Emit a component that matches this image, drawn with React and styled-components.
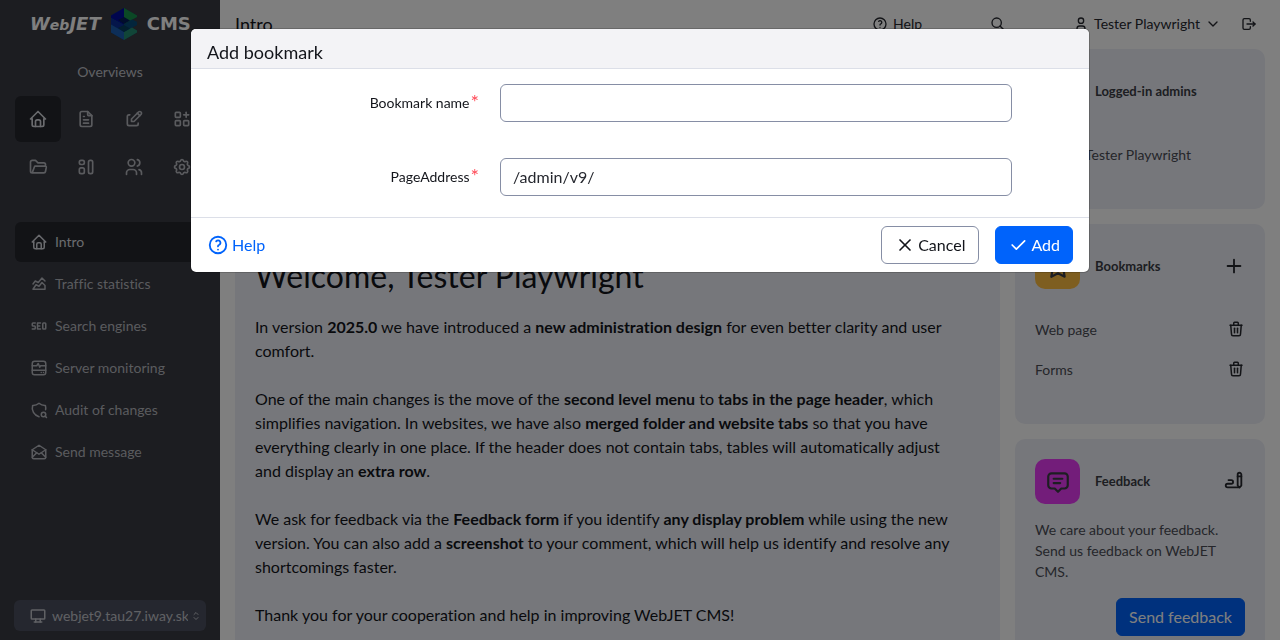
import React from "react";
import styled, { createGlobalStyle, css } from "styled-components";
import {
  TbHome, TbFileText, TbEdit, TbApps, TbFolderOpen, TbUsers, TbSettings,
  TbChartAreaLine, TbSeo, TbShieldSearch, TbMailOpened, TbDeviceDesktop,
  TbSelector, TbHelp, TbSearch, TbUser, TbChevronDown, TbLogout, TbTrash,
  TbPlus, TbX, TbCheck, TbWriting, TbMessage2, TbStar,
} from "react-icons/tb";

const FONT = `Lato, "Noto Sans", sans-serif`;

const GlobalStyle = createGlobalStyle`
  * { box-sizing: border-box; }
  body {
    margin: 0;
    background: #fff;
    color: #13151b;
    font-family: ${FONT};
    font-size: 16px;
    line-height: 24px;
    font-variant-ligatures: no-common-ligatures;
  }
  button, input, select { font-family: inherit; }
  svg { display: block; flex: none; }
`;

const Shell = styled.div`
  display: grid;
  grid-template-columns: 220px minmax(0, 1fr);
  grid-template-rows: minmax(0, 1fr);
  height: 100vh;
  overflow: hidden;
`;

const Sidebar = styled.aside`
  display: flex;
  flex-direction: column;
  padding: 7px 14px 9px;
  background: #383a42;
`;

const Brand = styled.a`
  display: flex;
  align-items: center;
  gap: 9px;
  height: 34px;
  padding-left: 16px;
  color: #fff;
  text-decoration: none;
  font: bold 18px/34px "DejaVu Sans", sans-serif;
`;

const BrandName = styled.span`
  font-style: italic;
  small { font-size: 14px; }
`;

const SectionName = styled.div`
  margin: 19px 0 12px;
  text-align: center;
  font-size: 14px;
  color: #c0c2c9;
`;

const Sections = styled.nav`
  display: grid;
  grid-template-columns: repeat(4, 46px);
  gap: 2px;
  justify-content: center;
`;

const SectionLink = styled.a`
  display: grid;
  place-items: center;
  height: 46px;
  border-radius: 6px;
  color: ${(p) => (p.$active ? "#d4d6dc" : "#b4b6bd")};
  background: ${(p) => (p.$active ? "#24262c" : "transparent")};
`;

const Menu = styled.nav`
  display: flex;
  flex-direction: column;
  gap: 2px;
  margin: 32px 1px 0;
`;

const MenuLink = styled.a`
  display: flex;
  align-items: center;
  gap: 7px;
  height: 40px;
  padding: 0 15px;
  border-radius: 6px;
  font-size: 14px;
  text-decoration: none;
  color: ${(p) => (p.$active ? "#d4d6dc" : "#b4b6bd")};
  background: ${(p) => (p.$active ? "#24262c" : "transparent")};
`;

const DomainPicker = styled.label`
  display: flex;
  align-items: center;
  gap: 2px;
  height: 31px;
  margin-top: auto;
  padding: 0 4px 0 15px;
  border-radius: 6px;
  background: #4b4f5f;
  color: #c0c2c9;
`;

const DomainSelect = styled.select`
  flex: 1;
  min-width: 0;
  padding: 0 0 0 3px;
  border: 0;
  appearance: none;
  background: transparent;
  color: inherit;
  font-size: 14px;
`;

const Main = styled.main`
  display: flex;
  flex-direction: column;
  min-width: 0;
`;

const TopBar = styled.header`
  display: flex;
  flex: none;
  align-items: center;
  height: 49px;
  padding: 0 23px 2px 15px;
`;

const PageTitle = styled.div`
  margin-right: auto;
  font-size: 18px;
`;

const TopLink = styled.a`
  display: flex;
  align-items: center;
  gap: 5px;
  font-size: 14px;
  color: #26282f;
  text-decoration: none;
`;

const TopButton = styled.button`
  display: flex;
  align-items: center;
  gap: 5px;
  margin-left: ${(p) => p.$space}px;
  padding: 0;
  border: 0;
  background: none;
  font-size: 14px;
  color: #26282f;
`;

const Content = styled.div`
  display: grid;
  flex: none;
  grid-template-columns: minmax(0, 1fr) 250px;
  gap: 15px;
  padding: 0 15px;
`;

const Card = styled.section`
  padding: 20px;
  border-radius: 10px;
  background: #edeff6;
`;

const Article = styled(Card)`
  padding: 206px 36px 20px 20px;
  h1 { margin: 0 0 18px; font-size: 32px; line-height: 42px; font-weight: 400; }
  p { margin: 0 0 24px; }
`;

const Side = styled.div`
  display: flex;
  flex-direction: column;
  gap: 15px;
`;

const CardHead = styled.div`
  display: flex;
  align-items: center;
  margin-bottom: 15px;
`;

const Badge = styled.div`
  display: grid;
  place-items: center;
  width: 45px;
  height: 45px;
  margin-right: 15px;
  border-radius: 10px;
  color: #3a3c44;
  background: ${(p) => p.$color};
`;

const CardTitle = styled.h2`
  flex: 1;
  margin: 0;
  padding-bottom: 2px;
  font-size: 13px;
  font-weight: 700;
  color: #3a3c44;
`;

const IconButton = styled.button`
  padding: 0 0 2px;
  border: 0;
  background: none;
  color: #26282f;
`;

const List = styled.ul`
  margin: 0;
  padding: 6px 0 14px;
  list-style: none;
  font-size: 14px;
  color: #4a4c55;
`;

const ListRow = styled.li`
  display: flex;
  align-items: center;
  justify-content: space-between;
  height: 40px;
  padding-left: ${(p) => (p.$indent ? 50 : 0)}px;
  a { color: inherit; text-decoration: none; }
`;

const Note = styled.p`
  margin: 0 0 16px;
  font-size: 14px;
  line-height: 21px;
  color: #4a4c55;
`;

const Button = styled.button`
  display: flex;
  align-items: center;
  gap: 3px;
  height: 38px;
  padding: 0 13px 1px;
  border: 1px solid #868ea5;
  border-radius: 6px;
  background: #fff;
  color: #13151b;
  font-size: 16px;
  ${(p) => p.$primary && css`
    padding: 0 12px 1px;
    border-color: #0063fb;
    background: #0063fb;
    color: #fff;
  `}
`;

const CardActions = styled.div`
  display: flex;
  justify-content: flex-end;
`;

const Backdrop = styled.div`
  position: fixed;
  inset: 0;
  padding: 28px 15px;
  background: rgba(0, 0, 0, 0.5);
`;

const Dialog = styled.form`
  max-width: 900px;
  margin: 0 auto;
  border: 1px solid rgba(0, 0, 0, 0.18);
  border-radius: 6px;
  background: #fff;
  background-clip: padding-box;
`;

const DialogHead = styled.div`
  padding: 11px 16px 4px;
  border-bottom: 1px solid #dcdfe8;
  border-radius: 5px 5px 0 0;
  background: #f3f3f6;
  h2 { margin: 0; font-size: 18px; line-height: 24px; font-weight: 400; color: #13151b; }
`;

const DialogBody = styled.div`
  display: grid;
  gap: 36px;
  padding: 15px 77px 21px 15px;
`;

const Field = styled.div`
  display: grid;
  grid-template-columns: 8fr 15fr;
  align-items: center;
  column-gap: 21px;
`;

const Label = styled.label`
  display: flex;
  justify-content: flex-end;
  gap: 1px;
  font-size: 14px;
  &::after { content: "*"; color: #ff4b58; font-size: 20px; line-height: 20px; }
`;

const TextInput = styled.input`
  width: 100%;
  height: 38px;
  padding: 0 12px 2px;
  border: 1px solid #868ea5;
  border-radius: 6px;
  outline: none;
  color: #26282f;
  font-size: 16px;
`;

const DialogFoot = styled.div`
  display: flex;
  align-items: center;
  gap: 16px;
  padding: 8px 16px;
  border-top: 1px solid #dcdfe8;
`;

const HelpLink = styled.a`
  display: flex;
  align-items: center;
  gap: 3px;
  margin-right: auto;
  color: #0063fb;
  text-decoration: none;
`;

const Logo = () => (
  <svg width="28" height="34" viewBox="0 0 28 34" aria-hidden="true">
    <path d="M14 1L1 8.500V25.500L14 33L27 25.500V23.500L22 20.500L27 18V15L22 12.500L27 10V8.500Z" fill="#0a4a70" />
    <path d="M14 1L1 8.500V11L14 18Z" fill="#000a9c" />
    <path d="M14 1L27 8.500V10L14 17Z" fill="#17904a" />
    <path d="M1 11L14 18L22 12.500L27 15V18L14 25L1 17.500Z" fill="#064a78" />
    <path d="M1 11L14 18V25L1 17.500Z" fill="#0b2c96" />
    <path d="M1 17.500L14 25V33L1 25.500Z" fill="#1b5cb0" />
    <path d="M14 25L22 20.500L27 23.500V25.500L14 33Z" fill="#238a70" />
    <path d="M8 13L14 10L20 13.500L14 17Z" fill="#021a58" />
    <path d="M8 21L14 18L20 21.500L14 25Z" fill="#043c5c" />
  </svg>
);

const Drawn = ({ size, children }) => (
  <svg width={size} height={size} viewBox="0 0 24 24" fill="none" stroke="currentColor"
    strokeWidth="2" strokeLinecap="round" strokeLinejoin="round" aria-hidden="true">
    {children}
  </svg>
);

const Blocks = ({ size }) => (
  <Drawn size={size}>
    <rect x="4" y="4" width="6" height="5" rx="2" />
    <rect x="4" y="13" width="6" height="7" rx="2" />
    <rect x="15" y="4" width="5" height="16" rx="2" />
  </Drawn>
);

const ServerRack = ({ size }) => (
  <Drawn size={size}>
    <rect x="3" y="3" width="18" height="18" rx="3" />
    <path d="M3 9h6l2 -3l2 5l1 -2h7M3 15h18M15 18h0M18 18h0" />
  </Drawn>
);

const sections = [
  ["Overviews", TbHome], ["Websites", TbFileText], ["Blog", TbEdit], ["Applications", TbApps],
  ["Files", TbFolderOpen], ["Templates", Blocks], ["Users", TbUsers], ["Settings", TbSettings],
];

const menu = [
  ["Intro", TbHome], ["Traffic statistics", TbChartAreaLine], ["Search engines", TbSeo],
  ["Server monitoring", ServerRack], ["Audit of changes", TbShieldSearch], ["Send message", TbMailOpened],
];

export default function App() {
  return (
    <>
      <GlobalStyle />
      <Shell>
        <Sidebar>
          <Brand href="#">
            <BrandName>W<small>eb</small>JET</BrandName>
            <Logo />
            <span>CMS</span>
          </Brand>
          <SectionName>Overviews</SectionName>
          <Sections>
            {sections.map(([name, Icon], i) => (
              <SectionLink key={name} href="#" aria-label={name} $active={i === 0}>
                <Icon size={20} />
              </SectionLink>
            ))}
          </Sections>
          <Menu>
            {menu.map(([name, Icon], i) => (
              <MenuLink key={name} href="#" $active={i === 0}>
                <Icon size={18} />
                {name}
              </MenuLink>
            ))}
          </Menu>
          <DomainPicker>
            <TbDeviceDesktop size={18} />
            <DomainSelect aria-label="Domain">
              <option>webjet9.tau27.iway.sk</option>
            </DomainSelect>
            <TbSelector size={12} />
          </DomainPicker>
        </Sidebar>
        <Main>
          <TopBar>
            <PageTitle>Intro</PageTitle>
            <TopLink href="#"><TbHelp size={16} />Help</TopLink>
            <TopButton $space={68} aria-label="Search"><TbSearch size={16} /></TopButton>
            <TopButton $space={67}><TbUser size={16} />Tester Playwright<TbChevronDown size={16} /></TopButton>
            <TopButton $space={20} aria-label="Log out"><TbLogout size={16} /></TopButton>
          </TopBar>
          <Content>
            <Article>
              <h1>Welcome, Tester Playwright</h1>
              <p>In version <b>2025.0</b> we have introduced a <b>new administration design</b> for even better clarity and user comfort.</p>
              <p>One of the main changes is the move of the <b>second level menu</b> to <b>tabs in the page header</b>, which simplifies navigation. In websites, we have also <b>merged folder and website tabs</b> so that you have everything clearly in one place. If the header does not contain tabs, tables will automatically adjust and display an <b>extra row</b>.</p>
              <p>We ask for feedback via the <b>Feedback form</b> if you identify <b>any display problem</b> while using the new version. You can also add a <b>screenshot</b> to your comment, which will help us identify and resolve any shortcomings faster.</p>
              <p>Thank you for your cooperation and help in improving WebJET CMS!</p>
            </Article>
            <Side>
              <Card>
                <CardHead>
                  <Badge $color="#3bb3ea"><TbUser size={26} /></Badge>
                  <CardTitle>Logged-in admins</CardTitle>
                </CardHead>
                <List><ListRow $indent>Tester Playwright</ListRow></List>
              </Card>
              <Card>
                <CardHead>
                  <Badge $color="#fdbc40"><TbStar size={26} /></Badge>
                  <CardTitle>Bookmarks</CardTitle>
                  <IconButton aria-label="Add bookmark"><TbPlus size={22} /></IconButton>
                </CardHead>
                <List>
                  {["Web page", "Forms"].map((name) => (
                    <ListRow key={name}>
                      <a href="#">{name}</a>
                      <IconButton aria-label={`Delete ${name}`}><TbTrash size={18} /></IconButton>
                    </ListRow>
                  ))}
                </List>
              </Card>
              <Card>
                <CardHead>
                  <Badge $color="#e63af5"><TbMessage2 size={26} /></Badge>
                  <CardTitle>Feedback</CardTitle>
                  <IconButton aria-label="Write feedback"><TbWriting size={22} /></IconButton>
                </CardHead>
                <Note>We care about your feedback. Send us feedback on WebJET CMS.</Note>
                <CardActions><Button $primary>Send feedback</Button></CardActions>
              </Card>
            </Side>
          </Content>
        </Main>
      </Shell>
      <Backdrop>
        <Dialog role="dialog" aria-modal="true" aria-labelledby="dialog-title">
          <DialogHead><h2 id="dialog-title">Add bookmark</h2></DialogHead>
          <DialogBody>
            <Field>
              <Label htmlFor="bookmark-name">Bookmark name</Label>
              <TextInput id="bookmark-name" type="text" />
            </Field>
            <Field>
              <Label htmlFor="page-address">PageAddress</Label>
              <TextInput id="page-address" type="text" defaultValue="/admin/v9/" />
            </Field>
          </DialogBody>
          <DialogFoot>
            <HelpLink href="#"><TbHelp size={22} />Help</HelpLink>
            <Button type="button"><TbX size={20} />Cancel</Button>
            <Button type="submit" $primary><TbCheck size={20} />Add</Button>
          </DialogFoot>
        </Dialog>
      </Backdrop>
    </>
  );
}
